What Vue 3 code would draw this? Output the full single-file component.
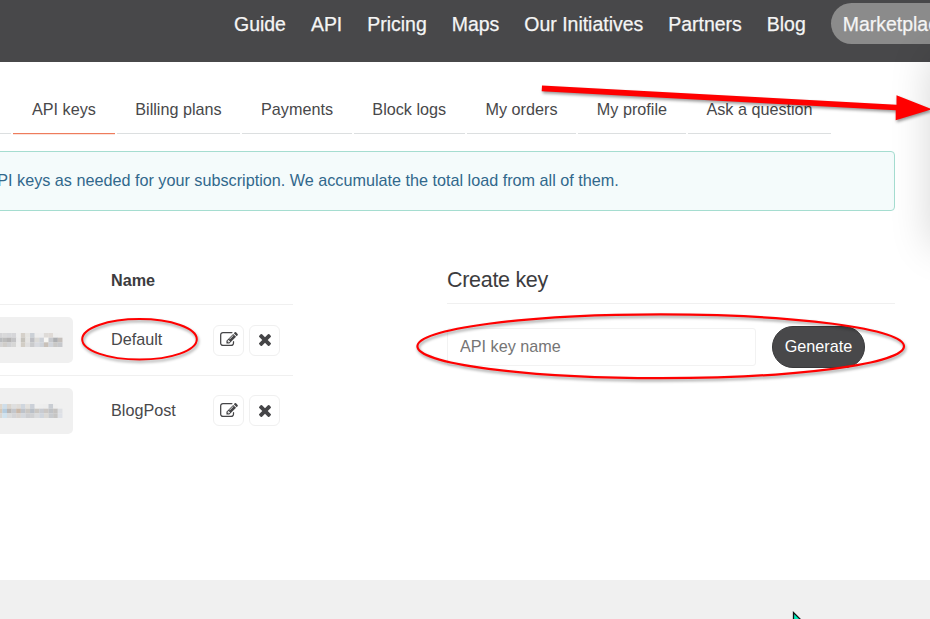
<script setup>
const nav = ['Guide', 'API', 'Pricing', 'Maps', 'Our Initiatives', 'Partners', 'Blog']
const tabs = ['API keys', 'Billing plans', 'Payments', 'Block logs', 'My orders', 'My profile', 'Ask a question']

// Colour cells of the pixelated key text, one list per mosaic row
const keys = [
  {
    name: 'Default',
    cells: [
      ['#d5d5d7', '#d9d9da', '#d6d7da', '#d6d6d9', '#eeeeee', '#d5d0c9', '#e6e5e2', '#cbd0d6', '#ededed', '#ededee', '#dedbd8', '#dfdad6', '#eeeeee', '#efefef'],
      ['#b9bbbe', '#bcbcbc', '#b5b4b4', '#c3c3c5', '#ececec', '#c6c3bc', '#e6e5e3', '#bdbec3', '#dcdbd8', '#cdd1d7', '#f7f6f3', '#c7c9cd', '#adafb2', '#c4bfbb'],
      ['#d4d4d5', '#d0cdc9', '#d0d1d3', '#d7d7d6', '#eeeeee', '#d2cdc5', '#e0dfdf', '#c9cacc', '#d8dadf', '#cfd3d9', '#c9c1b9', '#d0d4da', '#c9c8c6', '#c6c8cc']
    ]
  },
  {
    name: 'BlogPost',
    cells: [
      ['#dfd7cc', '#cfdeea', '#dad5ce', '#dedfe0', '#dfdcd8', '#cfd6de', '#e3e1dd', '#cbd0d8', '#efefef', '#eeeeee', '#ededed', '#c9cdd3', '#eeeeee', '#f0f0f0'],
      ['#d6c8b8', '#b5cde0', '#b9b6b4', '#c4c7cc', '#c9b8a9', '#bec3ca', '#cac7c3', '#b9bfc7', '#cac7c3', '#c8cbd1', '#cbc7c4', '#bfc2c6', '#c4c2c0', '#dee0e4'],
      ['#d9d7d4', '#d0e3ef', '#dadbdc', '#d3d4d7', '#d8d3cf', '#d4d8dd', '#cdced1', '#cfd0d2', '#dadbdd', '#cfd5dd', '#dbd9d6', '#c7cace', '#c6c5c4', '#dee1e7']
    ]
  }
]
</script>

<template>
  <div class="page">
    <header class="top">
      <a v-for="n in nav" :key="n">{{ n }}</a>
      <a class="market">Marketplace</a>
    </header>

    <nav class="tabs">
      <a class="stub"></a>
      <a v-for="(t, i) in tabs" :key="t" :class="{ active: i === 0 }">{{ t }}</a>
    </nav>

    <div class="notice"><span>API keys as needed for your subscription. We accumulate the total load from all of them.</span></div>

    <main class="content">
      <section class="table">
        <div class="row head"><b>Name</b></div>
        <div v-for="k in keys" :key="k.name" class="row">
          <div class="key">
            <svg width="63" height="14" viewBox="0 0 63 14">
              <g v-for="(line, y) in k.cells" :key="y">
                <rect v-for="(c, x) in line" :key="x" :x="x * 4.62 - 2.3" :y="y * 4.67" width="4.7" height="4.7" :fill="c" />
              </g>
            </svg>
          </div>
          <span class="name">{{ k.name }}</span>
          <button class="icon edit">
            <svg width="18" height="16" viewBox="0 0 1792 1600">
              <path fill="#454547" d="M888 1056l116-116-152-152-116 116v56h96v96h56zm440-720q-16-16-33 1L945 687q-17 17-1 33t33-1l350-350q17-17 1-33zm80 594v190q0 119-84.500 203.500T1120 1408H288q-119 0-203.500-84.500T0 1120V288Q0 169 84.500 84.500T288 0h832q63 0 117 25 15 7 18 23 3 17-9 29l-49 49q-14 14-32 8-23-6-45-6H288q-66 0-113 47t-47 113v832q0 66 47 113t113 47h832q66 0 113-47t47-113V994q0-13 9-22l64-64q15-15 35-7t20 29zm-96-738l288 288-672 672H640V864zm444 132l-92 92-288-288 92-92q28-28 68-28t68 28l152 152q28 28 28 68t-28 68z" />
            </svg>
          </button>
          <button class="icon">
            <svg width="12" height="12" viewBox="0 0 1188 1188">
              <path fill="#454547" d="M1188 956q0 40-28 68l-136 136q-28 28-68 28t-68-28L594 866l-294 294q-28 28-68 28t-68-28L28 1024Q0 996 0 956t28-68l294-294L28 300Q0 272 0 232t28-68L164 28q28-28 68-28t68 28l294 294L888 28q28-28 68-28t68 28l136 136q28 28 28 68t-28 68L866 594l294 294q28 28 28 68z" />
            </svg>
          </button>
        </div>
      </section>

      <section class="create">
        <h2>Create key</h2>
        <div class="form">
          <input type="text" placeholder="API key name" />
          <button class="generate">Generate</button>
        </div>
      </section>
    </main>

    <footer></footer>

    <div class="side-shadow"></div>

    <svg class="marks" width="930" height="619" viewBox="0 0 930 619">
      <g class="ink">
        <ellipse cx="139.500" cy="339.300" rx="57.300" ry="20.200" fill="none" stroke="#f00" stroke-width="2" />
        <ellipse cx="660.700" cy="346.300" rx="243.300" ry="31.900" fill="none" stroke="#f00" stroke-width="2.200" />
        <path d="M542 85.500L896.500 104.700V95.300L932 109.200L895.700 120.300V110.300L541.700 91.200Z" fill="#f00" />
      </g>
      <path d="M793.500 612.500V630L806 625Z" fill="#00f0c0" stroke="#111" stroke-width="1.300" />
    </svg>
  </div>
</template>

<style>
body {
  margin: 0;
  overflow: hidden;
}
</style>

<style scoped>
.page {
  position: relative;
  display: flex;
  flex-direction: column;
  width: 930px;
  height: 619px;
  overflow: hidden;
  background: #fff;
  color: #48484a;
  font: 16.2px/20px "Liberation Sans", Arial, sans-serif;
}
* {
  box-sizing: border-box;
}
.top {
  flex: none;
  display: flex;
  align-items: flex-start;
  gap: 25px;
  height: 62px;
  padding: 3px 0 0 234px;
  background: #48484a;
  color: #f5f5f5;
  font-size: 19.47px;
  line-height: 42px;
  white-space: nowrap;
  -webkit-text-stroke: 0.25px #f5f5f5;
}
.market {
  height: 41px;
  padding: 0 12px;
  border-radius: 21px;
  background: #8b8b8b;
}
.tabs {
  flex: none;
  display: flex;
  gap: 2px;
  height: 72px;
  white-space: nowrap;
}
.tabs a {
  padding: 37px 18.7px 0;
  border-bottom: 1px solid #dcdfe0;
}
.tabs .stub {
  width: 11.3px;
  padding: 0;
}
.tabs .active {
  border-bottom-color: #ee7c5c;
  box-shadow: 0 1px 0 #fbe3dc;
}
.notice {
  flex: none;
  width: 899px;
  height: 60px;
  margin: 17px 0 0 -4px;
  padding: 18px 0 0;
  border: 1px solid #a5ddd0;
  border-radius: 4px;
  background: #f4fbfb;
  color: #31688c;
  white-space: nowrap;
}
.notice span {
  margin-left: -10.5px;
}
.content {
  flex: 1;
  display: flex;
  gap: 154px;
}
.table {
  width: 293px;
}
.row {
  display: flex;
  align-items: center;
  height: 71px;
  border-bottom: 1px solid #f0f0f0;
}
.row:last-child {
  height: 69px;
  border-bottom: 0;
}
.row.head {
  height: 94px;
  padding: 45px 0 0 111px;
}
.head b {
  color: #3c3c3e;
}
.key {
  width: 73px;
  height: 46px;
  padding-top: 16px;
  border-radius: 0 5px 5px 0;
  background: #f0f0f0;
}
.key svg {
  display: block;
}
.name {
  width: 102px;
  margin: -2px 0 0 38px;
}
.icon {
  display: flex;
  align-items: center;
  justify-content: center;
  width: 31px;
  height: 31px;
  padding: 0;
  border: 1px solid #f0f0f0;
  border-radius: 6px;
  background: #fff;
}
.icon.edit {
  margin-right: 5px;
}
.create {
  width: 448px;
}
h2 {
  height: 93px;
  margin: 0;
  padding-top: 56px;
  border-bottom: 1px solid #f0f0f0;
  font-size: 21.500px;
  letter-spacing: -0.3px;
  font-weight: 400;
  line-height: 26px;
  color: #3c3c3e;
}
.form {
  display: flex;
  align-items: center;
  gap: 16px;
  padding-top: 22px;
}
input {
  width: 309px;
  height: 38px;
  padding: 0 12px 1px;
  border: 1px solid #f2f2f2;
  border-radius: 3px;
  background: #fff;
  font: inherit;
}
input::placeholder {
  color: #757575;
}
.generate {
  width: 93px;
  height: 42px;
  padding: 0 0 2px;
  border: 1px solid #39393b;
  border-radius: 21px;
  background: #48484a;
  color: #fff;
  font: inherit;
}
footer {
  flex: none;
  height: 39px;
  background: #f0f0f0;
}
.side-shadow {
  position: absolute;
  left: 931px;
  top: 50px;
  width: 60px;
  height: 190px;
  box-shadow: 0 6px 40px rgba(0, 0, 0, 0.17);
}
.marks {
  position: absolute;
  left: 0;
  top: 0;
}
.ink {
  filter: drop-shadow(1.5px 2.500px 1.500px rgba(0, 0, 0, 0.4));
}
</style>
